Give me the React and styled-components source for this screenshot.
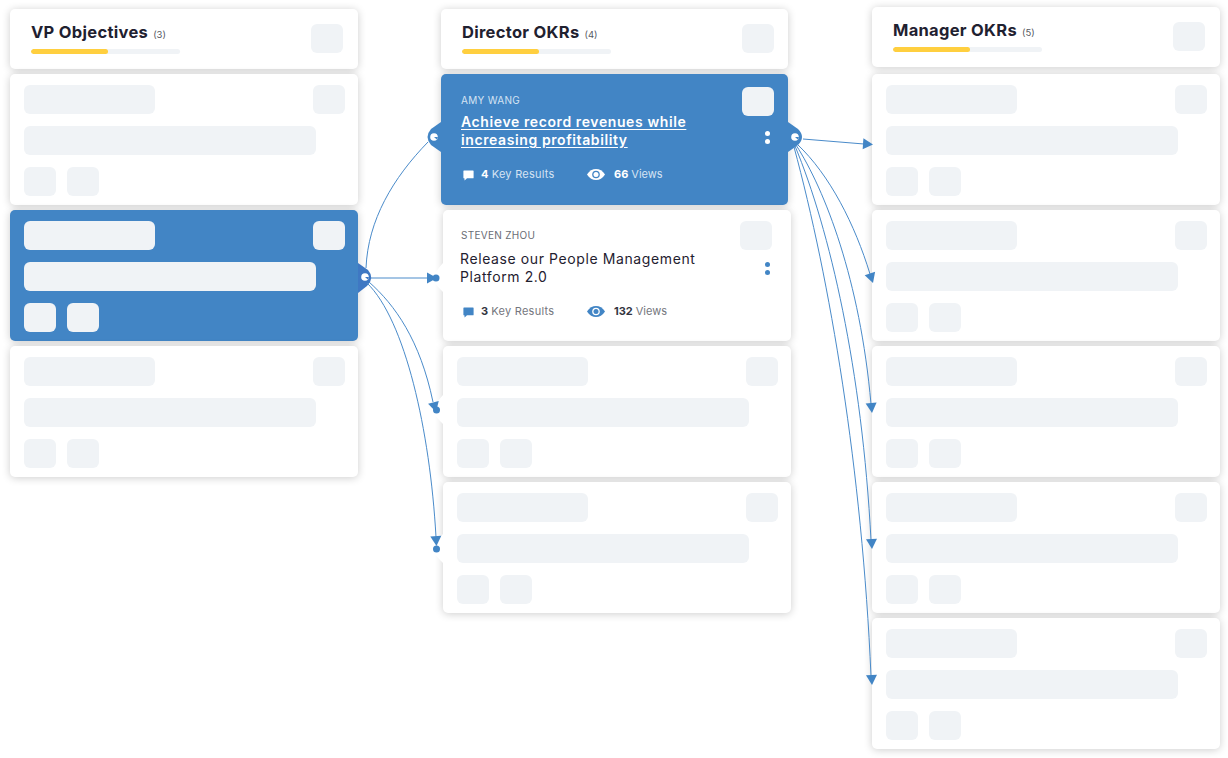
import React from 'react';
import styled, { createGlobalStyle } from 'styled-components';

const Global = createGlobalStyle`
  html, body { margin: 0; padding: 0; background: #fff; }
  body { font-family: Inter, "Open Sans", "Liberation Sans", sans-serif; }
`;

const BLUE = '#4285c5';

const Board = styled.div`
  position: relative;
  width: 1228px;
  height: 758px;
  overflow: hidden;
  display: flex;
  gap: 83px;
  padding-left: 10px;
  box-sizing: border-box;
  background: #fff;
`;

const Column = styled.div`
  width: 348px;
  flex: none;
  display: flex;
  flex-direction: column;
  padding-top: 9px;
`;

const Panel = styled.div`
  box-sizing: border-box;
  flex: none;
  background: ${p => (p.$active ? BLUE : '#fff')};
  border-radius: 5px;
  box-shadow: 0 1px 8px rgba(0, 0, 0, 0.2);
  width: ${p => p.$w || 348}px;
  margin-left: ${p => p.$shift || 0}px;
`;

const Head = styled(Panel)`
  height: 60px;
  margin-top: ${p => p.$top || 0}px;
  margin-bottom: ${p => p.$after || 5}px;
  padding: 15px ${p => p.$right || 15}px 0 21px;
  display: flex;
  justify-content: space-between;
  align-items: flex-start;
`;

const HeadText = styled.div`
  width: 149px;
`;

const Title = styled.div`
  font-size: 16.5px;
  line-height: 17px;
  height: 17px;
  font-weight: 700;
  color: #1f2130;
  white-space: nowrap;
  letter-spacing: 0.3px;
`;

const Count = styled.span`
  font-size: 9.5px;
  font-weight: 400;
  letter-spacing: 0;
  color: #55585f;
  margin-left: 5px;
`;

const Progress = styled.div`
  height: 5px;
  margin-top: 8px;
  background: #f0f3f6;
  border-radius: 3px;
  overflow: hidden;
`;

const ProgressFill = styled.div`
  height: 100%;
  background: #ffcf3f;
  border-radius: 3px;
`;

const Bone = styled.div`
  width: ${p => p.$w}px;
  height: 29px;
  flex: none;
  border-radius: 6px;
  background: #f0f3f6;
`;

const Card = styled(Panel)`
  height: 131px;
  margin-bottom: 5px;
`;

const SkeletonCard = styled(Card)`
  padding: 11px 13px 0 14px;
  display: flex;
  flex-direction: column;
  gap: 12px;
`;

const BoneRow = styled.div`
  display: flex;
  justify-content: ${p => (p.$between ? 'space-between' : 'flex-start')};
  gap: 11px;
`;

const OkrCard = styled(Card)`
  display: flex;
  justify-content: space-between;
  padding: ${p => (p.$active ? '13px 14px 0 20px' : '11px 19px 0 17px')};
`;

const OkrBody = styled.div`
  display: flex;
  flex-direction: column;
  min-width: 0;
`;

const Owner = styled.div`
  font-size: 10px;
  line-height: 12px;
  letter-spacing: 0.3px;
  margin-top: ${p => (p.$active ? 7 : 8)}px;
  margin-left: ${p => (p.$active ? 0 : 1)}px;
  color: ${p => (p.$active ? '#d5e3f3' : '#6a6d75')};
`;

const OkrTitle = styled.div`
  margin-top: ${p => (p.$active ? 7 : 9)}px;
  width: 262px;
  font-size: 14px;
  line-height: 18px;
  letter-spacing: 0.6px;
  font-weight: ${p => (p.$active ? 600 : 400)};
  color: ${p => (p.$active ? '#fff' : '#1f2130')};
  text-decoration: ${p => (p.$active ? 'underline' : 'none')};
  text-underline-offset: 2px;
`;

const Stats = styled.div`
  display: flex;
  align-items: center;
  margin-top: 17px;
  margin-left: ${p => (p.$active ? 2 : 3)}px;
  height: 16px;
`;

const Stat = styled.div`
  display: flex;
  align-items: center;
  width: ${p => p.$w}px;
  font-size: 11px;
  letter-spacing: ${p => p.$track || 0}px;
  white-space: nowrap;
  color: ${p => (p.$active ? '#d5e3f3' : '#74767d')};
`;

const Strong = styled.b`
  font-weight: 700;
  margin-right: 3px;
  color: ${p => (p.$active ? '#fff' : '#33353f')};
`;

const IconSlot = styled.span`
  display: inline-flex;
  flex: none;
  width: ${p => p.$w}px;
  color: ${p => (p.$active ? '#fff' : BLUE)};
`;

const Side = styled.div`
  display: flex;
  flex-direction: column;
  align-items: center;
`;

const Dots = styled.div`
  display: flex;
  flex-direction: column;
  gap: 3px;
  margin-top: ${p => (p.$active ? 15 : 12)}px;
  margin-left: ${p => (p.$active ? 18 : 22)}px;
`;

const Dot = styled.i`
  display: block;
  width: 5px;
  height: 5px;
  border-radius: 50%;
  background: ${p => (p.$active ? '#fff' : BLUE)};
`;

const Wires = styled.svg`
  position: absolute;
  inset: 0;
  pointer-events: none;
`;

const Chat = () => (
  <svg width="11" height="11" viewBox="0 0 11 11" style={{ marginTop: 3 }}>
    <path d="M1 0.5h9a.6.6 0 0 1 .6.6v6.600a.6.6 0 0 1-.6.6H4L1.600 10.600 1.400 8.300H1a.6.6 0 0 1-.6-.6V1.100a.6.6 0 0 1 .6-.6z" fill="currentColor" />
  </svg>
);

const Eye = ({ active }) => (
  <svg width="18" height="11" viewBox="0 0 18 11">
    <path d="M0 5.500C2.500 1.800 5.500 0 9 0s6.500 1.800 9 5.500C15.500 9.200 12.500 11 9 11S2.500 9.200 0 5.500z" fill="currentColor" />
    <circle cx="9" cy="5.500" r="3.800" fill={active ? BLUE : '#fff'} />
    <circle cx="9" cy="5.500" r="2.500" fill="currentColor" />
  </svg>
);

const SkeletonBones = () => (
  <>
    <BoneRow $between>
      <Bone $w={131} />
      <Bone $w={32} />
    </BoneRow>
    <BoneRow>
      <Bone $w={292} />
    </BoneRow>
    <BoneRow>
      <Bone $w={32} />
      <Bone $w={32} />
    </BoneRow>
  </>
);

const Skeleton = ({ shift, active }) => (
  <SkeletonCard $shift={shift} $active={active}>
    <SkeletonBones />
  </SkeletonCard>
);

const Header = ({ title, count, top, after, w, right }) => (
  <Head $top={top} $after={after} $w={w} $right={right}>
    <HeadText>
      <Title>
        {title}
        <Count>({count})</Count>
      </Title>
      <Progress>
        <ProgressFill style={{ width: '51.5%' }} />
      </Progress>
    </HeadText>
    <Bone $w={32} />
  </Head>
);

const Okr = ({ active, owner, title, results, views, shift }) => (
  <OkrCard $active={active} $shift={shift} $w={active ? 347 : 348}>
    <OkrBody>
      <Owner $active={active}>{owner}</Owner>
      <OkrTitle $active={active}>{title}</OkrTitle>
      <Stats $active={active}>
        <Stat $active={active} $w={124} $track={0.25}>
          <IconSlot $active={active} $w={18}><Chat /></IconSlot>
          <Strong $active={active}>{results}</Strong> Key Results
        </Stat>
        <Stat $active={active} $w={100}>
          <IconSlot $active={active} $w={27}><Eye active={active} /></IconSlot>
          <Strong $active={active}>{views}</Strong> Views
        </Stat>
      </Stats>
    </OkrBody>
    <Side>
      <Bone $w={32} />
      <Dots $active={active}>
        <Dot $active={active} />
        <Dot $active={active} />
      </Dots>
    </Side>
  </OkrCard>
);

const Bump = ({ d, cx, cy, fill = BLUE }) => (
  <g>
    <path d={d} fill={fill} />
    <circle cx={cx} cy={cy} r="3.800" fill="#fff" />
    <path d={`M${cx} ${cy}h3.800a3.800 3.800 0 0 1-1 2.600z`} fill={fill} />
  </g>
);

const Arrow = ({ x, y, angle }) => (
  <path d="M0 0L-10 -5.500L-10 5.500Z" fill={BLUE} transform={`translate(${x} ${y}) rotate(${angle})`} />
);

const Connectors = () => (
  <Wires width="1228" height="758" viewBox="0 0 1228 758">
    <path d="M443 263C439 268 435 272 432 278C435 284 439 288 443 292Z" fill="#fff" />
    <path d="M443 395C439 400 435 404 432 410C435 416 439 420 443 424Z" fill="#fff" />
    <path d="M443 534C439 539 435 543 432 549C435 555 439 559 443 563Z" fill="#fff" />

    <Bump d="M358 263L368 270Q375 278 367 286L358 293Z" cx={365} cy={277} fill="#3f78c3" />
    <Bump d="M441 122L431 129Q424 137 431 145L441 152Z" cx={434} cy={137} />
    <Bump d="M788 122L798 129Q806 137 798 145L788 152Z" cx={795} cy={137} />

    <g fill="none" stroke="#4a8bca" strokeWidth="1">
      <path d="M366 268C368 220 393 178 428 142" />
      <path d="M371 278L430 278" />
      <path d="M369 282C395 305 420 340 433 402" />
      <path d="M367 283C405 320 430 430 436 537" />
      <path d="M803 139L864 144" />
      <path d="M797 144C830 175 855 225 870 274" />
      <path d="M796 145C825 190 860 280 871 404" />
      <path d="M795 146C830 230 862 370 871 540" />
      <path d="M794 147C830 280 862 470 871 676" />
    </g>

    <Arrow x={873} y={144.500} angle={4} />
    <Arrow x={873} y={283} angle={72} />
    <Arrow x={872} y={413} angle={85} />
    <Arrow x={872} y={549} angle={87} />
    <Arrow x={872} y={685} angle={87} />

    <Arrow x={437} y={278} angle={0} />
    <circle cx="436" cy="278" r="3.500" fill={BLUE} />
    <Arrow x={436} y={412} angle={75} />
    <circle cx="436.500" cy="410" r="3.500" fill={BLUE} />
    <Arrow x={436.500} y={546} angle={86} />
    <circle cx="436.500" cy="549" r="3.500" fill={BLUE} />
  </Wires>
);

export default function App() {
  return (
    <>
      <Global />
      <Board>
        <Column>
          <Header title="VP Objectives" count={3} />
          <Skeleton />
          <Skeleton active />
          <Skeleton />
        </Column>
        <Column>
          <Header title="Director OKRs" count={4} w={347} right={14} />
          <Okr
            active
            owner="AMY WANG"
            title="Achieve record revenues while increasing profitability"
            results={4}
            views={66}
          />
          <Okr
            owner="STEVEN ZHOU"
            title="Release our People Management Platform 2.0"
            results={3}
            views={132}
            shift={2}
          />
          <Skeleton shift={2} />
          <Skeleton shift={2} />
        </Column>
        <Column>
          <Header title="Manager OKRs" count={5} top={-2} after={7} />
          <Skeleton />
          <Skeleton />
          <Skeleton />
          <Skeleton />
          <Skeleton />
        </Column>
        <Connectors />
      </Board>
    </>
  );
}
